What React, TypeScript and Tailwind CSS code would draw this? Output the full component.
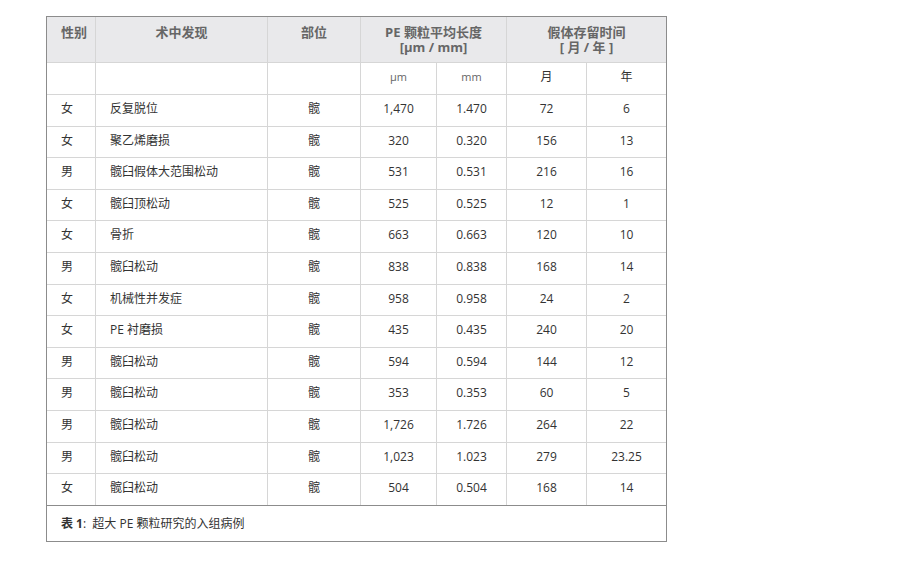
const rows = [
  ["女", "反复脱位", "1,470", "1.470", "72", "6"],
  ["女", "聚乙烯磨损", "320", "0.320", "156", "13"],
  ["男", "髋臼假体大范围松动", "531", "0.531", "216", "16"],
  ["女", "髋臼顶松动", "525", "0.525", "12", "1"],
  ["女", "骨折", "663", "0.663", "120", "10"],
  ["男", "髋臼松动", "838", "0.838", "168", "14"],
  ["女", "机械性并发症", "958", "0.958", "24", "2"],
  ["女", "PE 衬磨损", "435", "0.435", "240", "20"],
  ["男", "髋臼松动", "594", "0.594", "144", "12"],
  ["男", "髋臼松动", "353", "0.353", "60", "5"],
  ["男", "髋臼松动", "1,726", "1.726", "264", "22"],
  ["男", "髋臼松动", "1,023", "1.023", "279", "23.25"],
  ["女", "髋臼松动", "504", "0.504", "168", "14"],
];

// row heights as measured off the reference (border included)
const tall = [true, false, true, false, true, true, false, true, false, true, true, false, true];

const font = { fontFamily: '"Open Sans", "Noto Sans CJK SC", sans-serif' };

const App = () => {
  return (
    <div className="bg-white w-[900px] h-[565px] pt-4 pl-[46px]" style={font}>
      <div className="w-[621px] border border-[#8c8c8c]">
        <table className="table-fixed border-separate border-spacing-0 w-[619px]">
          <colgroup>
            <col className="w-[49px]" />
            <col className="w-[172px]" />
            <col className="w-[93px]" />
            <col className="w-[76px]" />
            <col className="w-[70px]" />
            <col className="w-[80px]" />
            <col className="w-[79px]" />
          </colgroup>
          <thead>
            <tr className="h-[46px] bg-[#e9e9eb] text-[13px] font-bold text-[#666] leading-[15px]">
              <th className="align-top text-left pl-[14px] pt-[8px] border-r border-b border-[#d6d6d6]">
                性别
              </th>
              <th className="align-top text-center pt-[8px] border-r border-b border-[#d6d6d6]">
                术中发现
              </th>
              <th className="align-top text-center pt-[8px] border-r border-b border-[#d6d6d6]">
                部位
              </th>
              <th
                colSpan={2}
                className="align-top text-center pt-[8px] border-r border-b border-[#d6d6d6]"
              >
                <div>PE 颗粒平均长度</div>
                <div>[μm / mm]</div>
              </th>
              <th
                colSpan={2}
                className="align-top text-center pt-[8px] border-b border-[#d6d6d6]"
              >
                <div>假体存留时间</div>
                <div>[ 月 / 年 ]</div>
              </th>
            </tr>
          </thead>
          <tbody>
            <tr className="h-[32px] text-center leading-[16px]">
              <td className="align-top pt-[6px] border-r border-b border-[#d6d6d6]"></td>
              <td className="align-top pt-[6px] border-r border-b border-[#d6d6d6]"></td>
              <td className="align-top pt-[6px] border-r border-b border-[#d6d6d6]"></td>
              <td className="align-top pt-[6px] border-r border-b border-[#d6d6d6] text-[11px] text-[#666]">μm</td>
              <td className="align-top pt-[6px] border-r border-b border-[#d6d6d6] text-[11px] text-[#666]">mm</td>
              <td className="align-top pt-[6px] border-r border-b border-[#d6d6d6] text-[12px] text-[#333]">月</td>
              <td className="align-top pt-[6px] border-b border-[#d6d6d6] text-[12px] text-[#333]">年</td>
            </tr>
            {rows.map((r, key) => {
              const last = key === rows.length - 1;
              const b = last ? "" : "border-b";
              const h = last ? "h-[31px]" : tall[key] ? "h-[32px]" : "h-[31px]";
              return (
                <tr key={key} className={`${h} text-[12px] text-[#333] leading-[16px]`}>
                  <td className={`align-top pt-[6px] pl-[14px] border-r ${b} border-[#d6d6d6]`}>{r[0]}</td>
                  <td className={`align-top pt-[6px] pl-[14px] border-r ${b} border-[#d6d6d6]`}>{r[1]}</td>
                  <td className={`align-top pt-[6px] text-center border-r ${b} border-[#d6d6d6]`}>髋</td>
                  <td className={`align-top pt-[6px] text-center border-r ${b} border-[#d6d6d6]`}>{r[2]}</td>
                  <td className={`align-top pt-[6px] text-center border-r ${b} border-[#d6d6d6]`}>{r[3]}</td>
                  <td className={`align-top pt-[6px] text-center border-r ${b} border-[#d6d6d6]`}>{r[4]}</td>
                  <td className={`align-top pt-[6px] text-center ${b} border-[#d6d6d6]`}>{r[5]}</td>
                </tr>
              );
            })}
          </tbody>
        </table>
        <div className="h-[36px] border-t border-[#8c8c8c] flex items-center pl-[14px] text-[12px] text-[#333]">
          <span className="font-bold">表 1</span>
          <span>:&nbsp;&nbsp;超大 PE 颗粒研究的入组病例</span>
        </div>
      </div>
    </div>
  );
};

export default App;
